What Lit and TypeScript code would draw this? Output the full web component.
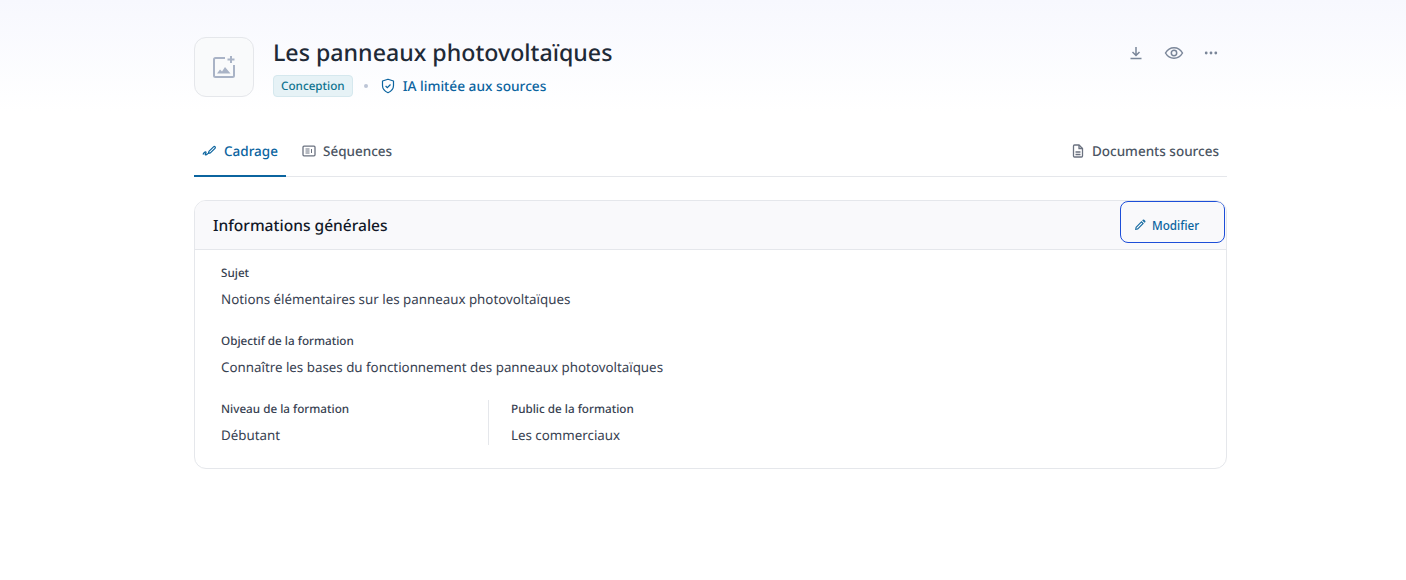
import { html, css, LitElement } from "lit";
import { customElement } from "lit/decorators.js";

@customElement("app-root")
export class AppRoot extends LitElement {
  static styles = css`
    :host {
      display: block;
      height: 580px;
      overflow: hidden;
      background: #fff;
      font-family: "Noto Sans", sans-serif;
      color: #1f2a37;
      text-rendering: geometricPrecision;
    }
    .hero {
      background: linear-gradient(180deg, #f7f8fe 0%, #ffffff 100%);
      height: 112px;
    }
    .wrap {
      width: 1033px;
      margin-left: 194px;
    }
    .head {
      display: flex;
      gap: 19px;
      padding-top: 37px;
    }
    .thumb {
      width: 58px;
      height: 58px;
      border: 1px solid #e5e7eb;
      border-radius: 12px;
      background: #f9fafb;
      display: flex;
      align-items: center;
      justify-content: center;
      flex: none;
    }
    .titles {
      flex: 1;
    }
    h1 {
      margin: -1px 0 0;
      font-size: 23.18px;
      line-height: 32px;
      font-weight: 500;
      color: #1f2a37;
    }
    .meta {
      display: flex;
      align-items: center;
      margin-top: 7px;
      height: 22px;
    }
    .badge {
      font-size: 11.7px;
      font-weight: 500;
      line-height: 19px;
      padding: 1px 7px 0;
      color: #0e7490;
      background: #e6f2f6;
      border: 1px solid #d5e8ee;
      border-radius: 4px;
    }
    .dot {
      width: 4px;
      height: 4px;
      border-radius: 50%;
      background: #bcc5d6;
      margin: 0 12px 0 11px;
    }
    .ai {
      display: flex;
      align-items: center;
      gap: 7px;
      font-size: 13.7px;
      font-weight: 500;
      color: #0b649f;
    }
    .actions {
      display: flex;
      align-items: center;
      gap: 19px;
      height: 30px;
      margin-top: 1px;
      margin-right: 8px;
      color: #7a8699;
    }
    .actions svg:first-child {
      margin-right: 1px;
    }
    .tabs {
      display: flex;
      align-items: stretch;
      gap: 8px;
      height: 64px;
      border-bottom: 1px solid #e5e7eb;
    }
    .tab {
      display: flex;
      align-items: center;
      gap: 7px;
      padding: 14px 8px 0;
      font-size: 13.5px;
      font-weight: 500;
      color: #4b5563;
      margin-bottom: -1px;
      border-bottom: 2px solid transparent;
      box-sizing: border-box;
    }
    .tab.active {
      color: #0b649f;
      border-bottom-color: #0b649f;
    }
    .spacer {
      flex: 1;
    }
    .card {
      margin-top: 23px;
      border: 1px solid #e5e7eb;
      border-radius: 12px;
      height: 269px;
      box-sizing: border-box;
      overflow: hidden;
    }
    .card-head {
      display: flex;
      justify-content: space-between;
      height: 49px;
      box-sizing: border-box;
      padding: 0 1px 0 18px;
      background: #f9f9fb;
      border-bottom: 1px solid #e5e7eb;
    }
    h2 {
      margin: 0;
      font-size: 15.55px;
      line-height: 49px;
      font-weight: 500;
      color: #111827;
    }
    .edit {
      display: flex;
      align-items: center;
      gap: 6px;
      box-sizing: border-box;
      width: 105px;
      height: 42px;
      padding: 5px 0 0 13px;
      border: 1px solid #1d4ed8;
      border-radius: 8px;
      background: transparent;
      font: 500 11.7px "Noto Sans", sans-serif;
      color: #0b649f;
    }
    .body {
      padding: 14px 26px 0;
    }
    .field {
      margin-bottom: 23px;
    }
    .label {
      font-size: 11.7px;
      line-height: 18px;
      font-weight: 500;
      color: #374151;
    }
    .value {
      margin-top: 7px;
      font-size: 13.33px;
      line-height: 20px;
      color: #374151;
    }
    .row {
      display: flex;
    }
    .row .field {
      margin: 0;
    }
    .row .field:first-child {
      width: 267px;
      border-right: 1px solid #e5e7eb;
      margin-right: 22px;
    }
  `;

  render() {
    return html`
      <div class="hero">
        <div class="wrap head">
          <div class="thumb">
            <svg width="24" height="24" viewBox="0 0 24 24" fill="none" stroke="#a9b3c6" stroke-width="2">
              <path d="M13 3H3.500A1.500 1.500 0 0 0 2 4.500V20.500A1.500 1.500 0 0 0 3.500 22H20.500A1.500 1.500 0 0 0 22 20.500V10" />
              <path d="M19 1V8M15.500 4.500H22.500" />
              <path d="M5 18.500l3-4 2 2 3-4.500 5.500 6.500z" fill="#a9b3c6" stroke="none" />
            </svg>
          </div>
          <div class="titles">
            <h1>Les panneaux photovoltaïques</h1>
            <div class="meta">
              <span class="badge">Conception</span>
              <span class="dot"></span>
              <span class="ai">
                <svg width="16" height="16" viewBox="0 0 16 16" fill="none" stroke="#0b649f" stroke-width="1.200">
                  <path d="M8 1.200l5.500 1.800v4.500c0 3.300-2.300 5.800-5.500 7.200-3.200-1.400-5.500-3.900-5.500-7.200V3z" stroke-linejoin="round" />
                  <path d="M5.600 8l1.700 1.700 3.200-3.200" />
                </svg>
                IA limitée aux sources
              </span>
            </div>
          </div>
          <div class="actions">
            <svg width="16" height="16" viewBox="0 0 16 16" fill="none" stroke="#7a8699" stroke-width="1.500">
              <path d="M8 2v8M4.500 7l3.500 3.500L11.500 7M2.500 13.500h11" />
            </svg>
            <svg width="20" height="16" viewBox="0 0 20 16" fill="none" stroke="#7a8699" stroke-width="1.500">
              <path d="M1.500 8C3.500 4.500 6.500 2.800 10 2.800s6.500 1.700 8.500 5.200c-2 3.500-5 5.200-8.500 5.200S3.500 11.500 1.500 8z" />
              <circle cx="10" cy="8" r="2.700" />
            </svg>
            <svg width="16" height="16" viewBox="0 0 16 16" fill="#7a8699">
              <circle cx="3.200" cy="8" r="1.400" />
              <circle cx="8" cy="8" r="1.400" />
              <circle cx="12.800" cy="8" r="1.400" />
            </svg>
          </div>
        </div>
      </div>
      <div class="wrap">
        <div class="tabs">
          <div class="tab active">
            <svg width="15" height="14" viewBox="0 0 15 14" fill="none" stroke="#0b649f" stroke-width="1.200">
              <path d="M1 10.500c.8-2 2.500-3.300 3-2.500.5.800-1.500 2.800-.5 3 1 .2 2-1 2.500-1.500" />
              <path d="M6.500 9.300l.4-1.900 4.600-4.600a1 1 0 0 1 1.500 0 1 1 0 0 1 0 1.500L8.400 8.900z" stroke-linejoin="round" />
            </svg>
            Cadrage
          </div>
          <div class="tab">
            <svg width="14" height="14" viewBox="0 0 14 14" fill="none" stroke="#6b7280" stroke-width="1.300">
              <rect x="1" y="2.200" width="12" height="9.600" rx="1" />
              <path d="M3.500 5h4M3.500 7h4M3.500 9h4M9.500 5v4" stroke-width="1" />
            </svg>
            Séquences
          </div>
          <div class="spacer"></div>
          <div class="tab">
            <svg width="14" height="14" viewBox="0 0 14 14" fill="none" stroke="#6b7280" stroke-width="1.300">
              <path d="M2.500 2a1 1 0 0 1 1-1h4.500l3.500 3.500V12a1 1 0 0 1-1 1h-7a1 1 0 0 1-1-1z" />
              <path d="M8 1v3.500h3.500M4.500 8h5M4.500 10.500h5" />
            </svg>
            Documents sources
          </div>
        </div>
        <div class="card">
          <div class="card-head">
            <h2>Informations générales</h2>
            <button class="edit">
              <svg width="12" height="12" viewBox="0 0 12 12" fill="#1a6ea3" stroke="none">
                <path d="M1 11l.6-3 5.900-5.900 2.400 2.400L4 10.400zM2.300 9.700l1.300-.4 4.700-4.700-.9-.9-4.700 4.700zM8.200 1.400l.6-.6a1 1 0 0 1 1.400 0l1 1a1 1 0 0 1 0 1.400l-.6.6z" fill-rule="evenodd" />
              </svg>
              Modifier
            </button>
          </div>
          <div class="body">
            <div class="field">
              <div class="label">Sujet</div>
              <div class="value">Notions élémentaires sur les panneaux photovoltaïques</div>
            </div>
            <div class="field">
              <div class="label">Objectif de la formation</div>
              <div class="value">Connaître les bases du fonctionnement des panneaux photovoltaïques</div>
            </div>
            <div class="row">
              <div class="field">
                <div class="label">Niveau de la formation</div>
                <div class="value">Débutant</div>
              </div>
              <div class="field">
                <div class="label">Public de la formation</div>
                <div class="value">Les commerciaux</div>
              </div>
            </div>
          </div>
        </div>
      </div>
    `;
  }
}
